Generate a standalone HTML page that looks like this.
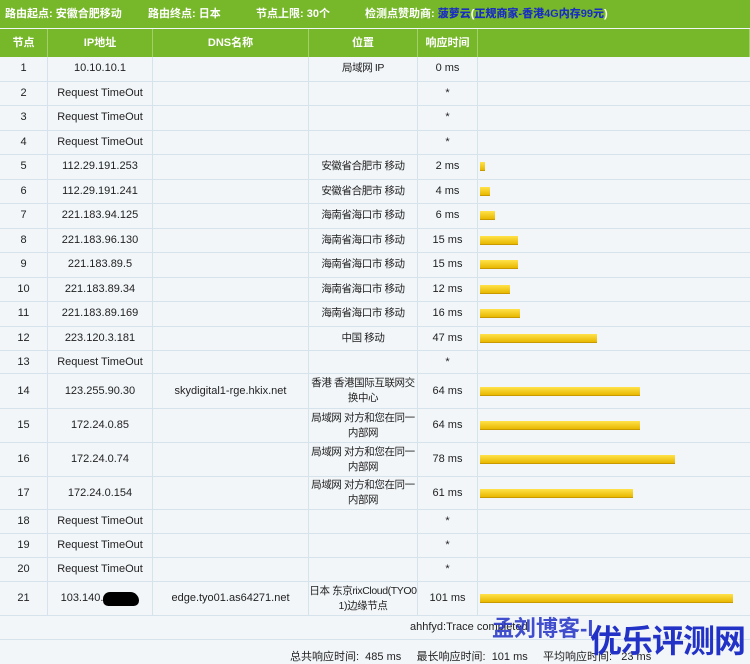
<!DOCTYPE html>
<html><head><meta charset="utf-8"><style>
*{margin:0;padding:0;box-sizing:border-box}
body{width:750px;height:663px;overflow:hidden;background:#f2f6f9;font-family:"Liberation Sans","Noto Sans CJK SC",sans-serif;font-size:11px;color:#222}
.top{position:absolute;left:0;top:0;width:750px;height:28px;background:#77b82a;color:#fff;font-weight:bold;font-size:11px;line-height:28px;white-space:nowrap}
.top span{position:absolute;top:0}
.row{position:absolute;left:0;width:750px;display:flex;border-bottom:1px solid #d6e2ec}
.c{border-right:1px solid #d6e2ec;display:flex;align-items:center;justify-content:center;text-align:center;line-height:15px;white-space:nowrap}
.c4{font-size:10.5px;letter-spacing:-0.4px}
.c1{width:48px}.c2{width:105px}.c3{width:156px}.c4{width:109px}.c5{width:60px}.c6{flex:1;border-right:none;justify-content:flex-start}
.hd{top:29px;height:28px;background:#77b82a;color:#fff;font-weight:bold;border-bottom:none}
.hd .c{border-right:1px solid #a3d06a;font-size:11px;letter-spacing:0}
.bar{height:9px;margin-left:2px;background:linear-gradient(#ffe24a,#e8b800);border-bottom:1px solid #c99a00}
</style></head><body>
<div class="top"><span style="left:5px">路由起点: 安徽合肥移动</span><span style="left:148px">路由终点: 日本</span><span style="left:256px">节点上限: 30个</span><span style="left:365px">检测点赞助商: <b style="color:#1a2fc0">菠萝云</b>(<b style="color:#1a2fc0">正规商家-香港4G内存99元</b>)</span></div>
<div class="row hd"><div class="c c1">节点</div><div class="c c2">IP地址</div><div class="c c3">DNS名称</div><div class="c c4">位置</div><div class="c c5">响应时间</div><div class="c c6"></div></div>

<div class="row" style="top:57px;height:24.5px"><div class="c c1">1</div><div class="c c2">10.10.10.1</div><div class="c c3"></div><div class="c c4">局域网 IP</div><div class="c c5">0 ms</div><div class="c c6"></div></div>
<div class="row" style="top:81.5px;height:24.5px"><div class="c c1">2</div><div class="c c2">Request TimeOut</div><div class="c c3"></div><div class="c c4"></div><div class="c c5">*</div><div class="c c6"></div></div>
<div class="row" style="top:106px;height:24.5px"><div class="c c1">3</div><div class="c c2">Request TimeOut</div><div class="c c3"></div><div class="c c4"></div><div class="c c5">*</div><div class="c c6"></div></div>
<div class="row" style="top:130.5px;height:24.5px"><div class="c c1">4</div><div class="c c2">Request TimeOut</div><div class="c c3"></div><div class="c c4"></div><div class="c c5">*</div><div class="c c6"></div></div>
<div class="row" style="top:155px;height:24.5px"><div class="c c1">5</div><div class="c c2">112.29.191.253</div><div class="c c3"></div><div class="c c4">安徽省合肥市 移动</div><div class="c c5">2 ms</div><div class="c c6"><div class="bar" style="width:5px"></div></div></div>
<div class="row" style="top:179.5px;height:24.5px"><div class="c c1">6</div><div class="c c2">112.29.191.241</div><div class="c c3"></div><div class="c c4">安徽省合肥市 移动</div><div class="c c5">4 ms</div><div class="c c6"><div class="bar" style="width:10px"></div></div></div>
<div class="row" style="top:204px;height:24.5px"><div class="c c1">7</div><div class="c c2">221.183.94.125</div><div class="c c3"></div><div class="c c4">海南省海口市 移动</div><div class="c c5">6 ms</div><div class="c c6"><div class="bar" style="width:15px"></div></div></div>
<div class="row" style="top:228.5px;height:24.5px"><div class="c c1">8</div><div class="c c2">221.183.96.130</div><div class="c c3"></div><div class="c c4">海南省海口市 移动</div><div class="c c5">15 ms</div><div class="c c6"><div class="bar" style="width:38px"></div></div></div>
<div class="row" style="top:253px;height:24.5px"><div class="c c1">9</div><div class="c c2">221.183.89.5</div><div class="c c3"></div><div class="c c4">海南省海口市 移动</div><div class="c c5">15 ms</div><div class="c c6"><div class="bar" style="width:38px"></div></div></div>
<div class="row" style="top:277.5px;height:24.5px"><div class="c c1">10</div><div class="c c2">221.183.89.34</div><div class="c c3"></div><div class="c c4">海南省海口市 移动</div><div class="c c5">12 ms</div><div class="c c6"><div class="bar" style="width:30px"></div></div></div>
<div class="row" style="top:302px;height:24.5px"><div class="c c1">11</div><div class="c c2">221.183.89.169</div><div class="c c3"></div><div class="c c4">海南省海口市 移动</div><div class="c c5">16 ms</div><div class="c c6"><div class="bar" style="width:40px"></div></div></div>
<div class="row" style="top:326.5px;height:24.5px"><div class="c c1">12</div><div class="c c2">223.120.3.181</div><div class="c c3"></div><div class="c c4">中国 移动</div><div class="c c5">47 ms</div><div class="c c6"><div class="bar" style="width:117px"></div></div></div>
<div class="row" style="top:351px;height:23px"><div class="c c1">13</div><div class="c c2">Request TimeOut</div><div class="c c3"></div><div class="c c4"></div><div class="c c5">*</div><div class="c c6"></div></div>
<div class="row" style="top:374px;height:35px"><div class="c c1">14</div><div class="c c2">123.255.90.30</div><div class="c c3">skydigital1-rge.hkix.net</div><div class="c c4">香港 香港国际互联网交<br>换中心</div><div class="c c5">64 ms</div><div class="c c6"><div class="bar" style="width:160px"></div></div></div>
<div class="row" style="top:409px;height:34px"><div class="c c1">15</div><div class="c c2">172.24.0.85</div><div class="c c3"></div><div class="c c4">局域网 对方和您在同一<br>内部网</div><div class="c c5">64 ms</div><div class="c c6"><div class="bar" style="width:160px"></div></div></div>
<div class="row" style="top:443px;height:34px"><div class="c c1">16</div><div class="c c2">172.24.0.74</div><div class="c c3"></div><div class="c c4">局域网 对方和您在同一<br>内部网</div><div class="c c5">78 ms</div><div class="c c6"><div class="bar" style="width:195px"></div></div></div>
<div class="row" style="top:477px;height:33px"><div class="c c1">17</div><div class="c c2">172.24.0.154</div><div class="c c3"></div><div class="c c4">局域网 对方和您在同一<br>内部网</div><div class="c c5">61 ms</div><div class="c c6"><div class="bar" style="width:153px"></div></div></div>
<div class="row" style="top:510px;height:24px"><div class="c c1">18</div><div class="c c2">Request TimeOut</div><div class="c c3"></div><div class="c c4"></div><div class="c c5">*</div><div class="c c6"></div></div>
<div class="row" style="top:534px;height:24px"><div class="c c1">19</div><div class="c c2">Request TimeOut</div><div class="c c3"></div><div class="c c4"></div><div class="c c5">*</div><div class="c c6"></div></div>
<div class="row" style="top:558px;height:24px"><div class="c c1">20</div><div class="c c2">Request TimeOut</div><div class="c c3"></div><div class="c c4"></div><div class="c c5">*</div><div class="c c6"></div></div>
<div class="row" style="top:582px;height:34px"><div class="c c1">21</div><div class="c c2">103.140.<span style="display:inline-block;width:36px;height:14px;background:#000;border-radius:8px 10px 6px 6px;vertical-align:middle"></span></div><div class="c c3">edge.tyo01.as64271.net</div><div class="c c4">日本 东京rixCloud(TYO0<br>1)边缘节点</div><div class="c c5">101 ms</div><div class="c c6"><div class="bar" style="width:253px"></div></div></div>
<div class="row" style="top:616px;height:24px"><span style="position:absolute;left:410px;top:5px">ahhfyd:Trace completed</span></div>
<div style="position:absolute;left:290px;top:648px;white-space:nowrap">总共响应时间:&nbsp; 485 ms&nbsp;&nbsp;&nbsp;&nbsp; 最长响应时间:&nbsp; 101 ms&nbsp;&nbsp;&nbsp;&nbsp; 平均响应时间:&nbsp;&nbsp; 23 ms</div>
<div style="position:absolute;left:492px;top:611px;color:#2231c6;font-weight:bold;font-size:22px;opacity:.85;white-space:nowrap">孟刘博客-l</div>
<div style="position:absolute;left:590px;top:616px;color:#2231c6;font-weight:bold;font-size:32px;white-space:nowrap;letter-spacing:-1px">优乐评测网</div>
</body></html>
